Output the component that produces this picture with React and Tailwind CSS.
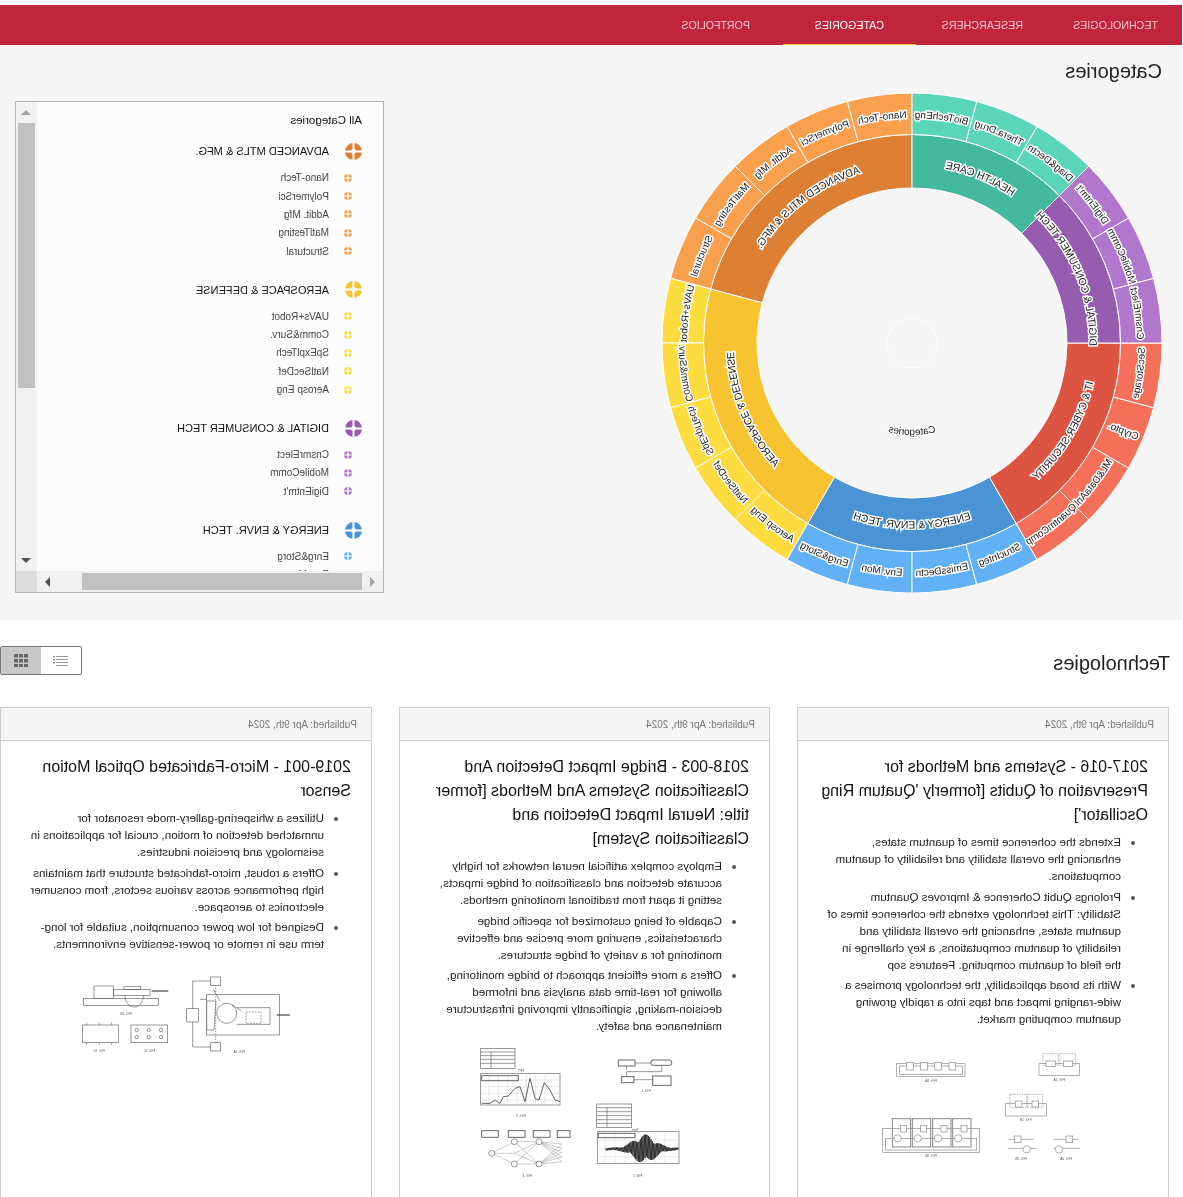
const SANS = "font-['Liberation_Sans',Arial,sans-serif]";

const navItems = [
  { label: "Technologies", w: "w-[135px]", pl: "pl-[24px]" },
  { label: "Researchers", w: "w-[131px]", pl: "pl-[24px]" },
  { label: "Categories", w: "w-[133px]", pl: "pl-[32px]", active: true },
  { label: "Portfolios", w: "w-[133px]", pl: "pl-[33px]" },
];

const groups = [
  { name: "ADVANCED MTLS & MFG.", dark: "#dd8033", light: "#f9a04e", leaves: ["Nano-Tech", "PolymerSci", "Addit. Mfg", "MatlTesting", "Structural"] },
  { name: "AEROSPACE & DEFENSE", dark: "#f8c330", light: "#fddc3f", leaves: ["UAVs+Robot", "Comm&Surv.", "SpExplTech", "NatlSecDef", "Aerosp Eng"] },
  { name: "ENERGY & ENVR. TECH", dark: "#4a94d6", light: "#62b0f5", leaves: ["Enrg&Storg", "Env. Mon", "EmissDectn", "StrucInteg"] },
  { name: "IT & CYBER-SECURITY", dark: "#dd5542", light: "#f5705b", leaves: ["QuantmComp", "ML&DataAnl", "Crypto.", "SecStorage"] },
  { name: "DIGITAL & CONSUMER TECH", dark: "#965cb0", light: "#b077cc", leaves: ["CnsmrElect", "MobileComm", "DigiEntm't"] },
  { name: "HEALTH CARE", dark: "#44b99c", light: "#5bd5b8", leaves: ["Diag&Dectn", "Thera.Drug", "BioTechEng"] },
];

// the side list runs in its own order and is scrolled off after the energy group
const panelGroups = [groups[0], groups[1], groups[4], groups[2]];

const C = 251;
const pt = (r, a) => {
  const t = (a * Math.PI) / 180;
  return [C + r * Math.sin(t), C - r * Math.cos(t)];
};
const sector = (r0, r1, a0, a1) => {
  const [x0, y0] = pt(r1, a0);
  const [x1, y1] = pt(r1, a1);
  const [x2, y2] = pt(r0, a1);
  const [x3, y3] = pt(r0, a0);
  const big = a1 - a0 > 180 ? 1 : 0;
  return `M${x0} ${y0}A${r1} ${r1} 0 ${big} 1 ${x1} ${y1}L${x2} ${y2}A${r0} ${r0} 0 ${big} 0 ${x3} ${y3}Z`;
};
// arc for a label: clockwise in the upper half, reversed in the lower half
const labelArc = (r, a0, a1) => {
  const mid = (a0 + a1) / 2;
  const flip = mid > 90 && mid < 270;
  const rr = flip ? r + 4 : r - 4;
  const [x0, y0] = pt(rr, a0 - 20);
  const [x1, y1] = pt(rr, a1 + 20);
  return flip
    ? `M${x1} ${y1}A${rr} ${rr} 0 0 0 ${x0} ${y0}`
    : `M${x0} ${y0}A${rr} ${rr} 0 0 1 ${x1} ${y1}`;
};

function ArcLabel({ id, r, a0, a1, children, size = 10.5 }) {
  return (
    <>
      <path id={id} d={labelArc(r, a0, a1)} fill="none" />
      {/* halo goes in its own layer, or each glyph's stroke eats the one before it */}
      <text aria-hidden="true" fontSize={size} fill="#fff" stroke="#fff" strokeWidth="3" className={SANS}>
        <textPath href={`#${id}`} startOffset="50%" textAnchor="middle">
          {children}
        </textPath>
      </text>
      <text fontSize={size} fill="#222" className={SANS}>
        <textPath href={`#${id}`} startOffset="50%" textAnchor="middle">
          {children}
        </textPath>
      </text>
    </>
  );
}

// short label that sits radially instead of along the arc
function RadialLabel({ r, a, children, size = 10 }) {
  const [x, y] = pt(r, a);
  const props = { x, y: y + 3.5, fontSize: size, textAnchor: "middle", transform: `rotate(-22.5 ${x} ${y})`, className: SANS };
  return (
    <>
      <text aria-hidden="true" {...props} fill="#fff" stroke="#fff" strokeWidth="3">
        {children}
      </text>
      <text {...props} fill="#222">
        {children}
      </text>
    </>
  );
}

function Sunburst() {
  const sectors = [];
  const labels = [];
  let a = 0;
  groups.forEach((g, gi) => {
    const start = a;
    const end = a + g.leaves.length * 15;
    sectors.push(<path key={g.name} d={sector(155, 208.5, start, end)} fill={g.dark} stroke="#fff" strokeWidth="1" />);
    labels.push(
      <ArcLabel key={g.name} id={`g${gi}`} r={181.5} a0={start} a1={end}>
        {g.name}
      </ArcLabel>
    );
    g.leaves.forEach((leaf, li) => {
      const l0 = start + li * 15;
      sectors.push(<path key={leaf} d={sector(208.5, 250, l0, l0 + 15)} fill={g.light} stroke="#fff" strokeWidth="1" />);
      labels.push(
        leaf === "Crypto." ? (
          <RadialLabel key={leaf} r={229} a={l0 + 7.5}>
            {leaf}
          </RadialLabel>
        ) : (
          <ArcLabel key={leaf} id={`l${gi}-${li}`} r={229} a0={l0} a1={l0 + 15} size={10}>
            {leaf}
          </ArcLabel>
        )
      );
    });
    a = end;
  });
  return (
    <svg width="502" height="502" viewBox="0 0 502 502" className="shrink-0">
      {sectors}
      <circle cx={C} cy={C} r="25" fill="none" stroke="#fff" strokeWidth="1" />
      {labels}
      <ArcLabel id="center" r={88} a0={170} a1={190} size={10}>
        Categories
      </ArcLabel>
    </svg>
  );
}

function PlusDot({ size, color, bar }) {
  return (
    <svg width={size} height={size} viewBox="0 0 17 17" className="shrink-0">
      <circle cx="8.5" cy="8.5" r="8.5" fill={color} />
      <path d="M8.5 0V17M0 8.5H17" stroke="#fff" strokeWidth={bar} />
      <circle cx="8.5" cy="8.5" r="2.4" fill="#fff" />
    </svg>
  );
}

function Arrow({ dir, color }) {
  const pts = {
    up: "0,7 5,2 10,7",
    down: "0,2 10,2 5,7",
    left: "7,0 7,10 2,5",
    right: "2,0 2,10 7,5",
  };
  return (
    <svg width="10" height="10" viewBox="0 0 10 10">
      <polygon points={pts[dir]} fill={color} />
    </svg>
  );
}

function CategoryPanel() {
  return (
    <div className="mt-[9px] w-[369px] h-[492px] border border-[#b5b5b5] bg-[#fcfcfc] flex flex-col shrink-0">
      <div className="flex flex-1 min-h-0">
        <div className="flex-1 overflow-hidden pl-[21px] pt-[11px]">
          <p className="text-[11.5px] leading-[14px] text-[#111]">All Categories</p>
          {panelGroups.map((g, i) => (
            <div key={g.name} className={i === 0 ? "mt-[16px]" : "mt-[21px]"}>
              <div className="flex items-center h-[17px] mb-[8.5px]">
                <PlusDot size={17} color={g.dark} bar={2} />
                <span className="ml-[16px] text-[11px] text-[#111] whitespace-nowrap">{g.name}</span>
              </div>
              {g.leaves.map((leaf) => (
                <div key={leaf} className="flex items-center h-[18.4px] pl-[10px]">
                  <PlusDot size={8} color={g.light} bar={2.5} />
                  <span className="ml-[15px] text-[10px] text-[#444] whitespace-nowrap">{leaf}</span>
                </div>
              ))}
            </div>
          ))}
        </div>
        <div className="w-[21px] bg-[#f1f1f1] flex flex-col items-center">
          <div className="h-[21px] flex items-center justify-center">
            <Arrow dir="up" color="#a3a3a3" />
          </div>
          <div className="w-[17px] h-[265px] bg-[#c1c1c1]" />
          <div className="mt-auto h-[21px] flex items-center justify-center">
            <Arrow dir="down" color="#505050" />
          </div>
        </div>
      </div>
      <div className="h-[21px] flex">
        <div className="flex-1 bg-[#f1f1f1] flex items-center pl-[6px]">
          <Arrow dir="left" color="#a3a3a3" />
          <div className="ml-[5px] w-[280px] h-[17px] bg-[#c1c1c1]" />
          <div className="ml-[30px]">
            <Arrow dir="right" color="#505050" />
          </div>
        </div>
        <div className="w-[21px] bg-[#dcdcdc]" />
      </div>
    </div>
  );
}

const s = { fill: "none", stroke: "#666", strokeWidth: 2 };

function Fig({ w, h, x, y, children, labels = [] }) {
  // drawn in the coordinates of the reference at 3x; the group undoes the page flip
  return (
    <svg width={w / 3} height={h / 3} viewBox={`0 0 ${w} ${h}`} className="block blur-[0.5px]" style={{ marginLeft: x, marginTop: y }}>
      <g transform={`translate(${w},0) scale(-1,1)`} {...s}>
        {children}
      </g>
      {labels.map(([lx, ly, t]) => (
        <text key={t + lx} x={w - lx} y={ly} fontSize="10" textAnchor="middle" fill="#555" className={SANS}>
          {t}
        </text>
      ))}
    </svg>
  );
}

function FigMotion() {
  return (
    <Fig w={750} h={330} x="61px" y="1px" labels={[[198, 176, "FIG. 1B"], [117, 289, "FIG. 1D"], [268, 289, "FIG. 1C"], [538, 292, "FIG. 1A"]]}>
      <rect x="70" y="127" width="225" height="21" />
      <rect x="102" y="90" width="58" height="37" />
      <rect x="160" y="100" width="110" height="18" />
      <rect x="192" y="92" width="50" height="8" />
      <path d="M195 118C195 165 250 165 250 118" />
      <path d="M275 105H325" strokeWidth="3" stroke="#222" />
      <rect x="67" y="207" width="108" height="53" />
      <path d="M80 200V207M118 200V207M155 200V207M80 260V266M118 260V266M155 260V266" />
      <rect x="213" y="207" width="110" height="53" />
      {[230, 266, 303].map((cx) => (
        <g key={cx}>
          <circle cx={cx} cy="222" r="5" />
          <circle cx={cx} cy="243" r="5" />
        </g>
      ))}
      <rect x="452" y="63" width="30" height="25" />
      <rect x="380" y="158" width="35" height="40" />
      <rect x="452" y="260" width="30" height="25" />
      <path d="M452 75H398V158M398 198V273H452" />
      <rect x="440" y="115" width="218" height="122" />
      <path d="M440 135H468L462 222H440Z" />
      <path d="M467 88V260" strokeDasharray="4 4" />
      <circle cx="500" cy="172" r="30" />
      <rect x="558" y="168" width="45" height="35" strokeDasharray="5 4" />
      <path d="M530 155H630V205H530" />
      <path d="M650 177H690" strokeWidth="3" stroke="#222" />
      <path d="M460 100L480 135M515 145L545 165M440 130L420 130" />
    </Fig>
  );
}

const wave = Array.from({ length: 110 }, (_, i) => {
  const env = Math.exp(-Math.pow((i - 58) / 22, 2)) * 40 + 4;
  return `${422 + i * 2} ${327 + (i % 2 ? env : -env) * (0.5 + 0.5 * Math.abs(Math.sin(i * 1.7)))}`;
}).join(" L");

const netLinks = [
  [80, 340, 148, 305], [80, 340, 148, 340], [80, 340, 148, 372],
  [148, 305, 222, 305], [148, 305, 222, 372], [148, 340, 222, 305], [148, 340, 222, 372],
  [148, 372, 222, 305], [148, 372, 222, 372],
  [222, 305, 290, 312], [222, 305, 290, 325], [222, 305, 290, 338], [222, 305, 290, 350], [222, 305, 290, 365],
  [222, 372, 290, 312], [222, 372, 290, 325], [222, 372, 290, 338], [222, 372, 290, 350], [222, 372, 290, 365],
];

function FigBridge() {
  return (
    <Fig w={720} h={471} x="64px" y="6px" labels={[[168, 232, "FIG. 3"], [187, 412, "FIG. 4"], [543, 155, "FIG. 1"], [518, 412, "FIG. 2"], [168, 96, "FFT"], [510, 272, "Time"]]}>
      <rect x="47" y="25" width="103" height="60" />
      <path d="M47 36H150M47 47H150M47 58H150M47 70H150M78 36V85" />
      <rect x="47" y="100" width="238" height="95" />
      <path d="M72 100V195M100 100V195M128 100V195M156 100V195M184 100V195M212 100V195M240 100V195M47 120H285M47 140H285M47 160H285M47 180H285" stroke="#bbb" strokeWidth="1" />
      <path d="M50 190L75 190L90 180L105 190L115 170L130 168L150 145L165 140L180 185L195 115L210 175L222 180L238 128L255 150L270 180L285 185" strokeWidth="2.5" stroke="#444" />
      <rect x="50" y="107" width="110" height="15" strokeWidth="3" />
      <rect x="460" y="60" width="50" height="18" strokeWidth="3" />
      <rect x="558" y="60" width="62" height="16" rx="6" strokeWidth="3" />
      <rect x="470" y="110" width="37" height="18" strokeWidth="3" />
      <rect x="563" y="108" width="55" height="28" strokeWidth="3" />
      <path d="M510 69H558M590 76V95H485V110M485 78V90M507 119H563" />
      <rect x="395" y="192" width="105" height="70" />
      <path d="M395 203H500M395 215H500M395 227H500M395 239H500M395 250H500M426 203V262" />
      <rect x="397" y="275" width="245" height="95" />
      <path d="M420 275V370M450 275V370M480 275V370M510 275V370M540 275V370M570 275V370M600 275V370M397 300H642M397 327H642M397 350H642" stroke="#ccc" strokeWidth="1" />
      <path d={`M${wave}`} strokeWidth="2.5" stroke="#222" />
      <rect x="400" y="280" width="110" height="13" strokeWidth="3" />
      {[[50, 50], [130, 50], [205, 50], [277, 38]].map(([x, w]) => (
        <rect key={x} x={x} y="272" width={w} height="20" strokeWidth="3" />
      ))}
      <g stroke="#999" strokeWidth="1.5">
        {netLinks.map(([a, b, c, d]) => (
          <path key={`${a}${b}${c}${d}`} d={`M${a} ${b}L${c} ${d}`} />
        ))}
      </g>
      {[[80, 340], [148, 305], [148, 372], [222, 305], [222, 372]].map(([cx, cy]) => (
        <circle key={`${cx}${cy}`} cx={cx} cy={cy} r="9" fill="#fff" />
      ))}
    </Fig>
  );
}

function FigQubits() {
  const tall = [97, 157, 218, 278];
  return (
    <Fig w={720} h={471} x="68px" y="14px" labels={[[213, 124, "FIG. 5A"], [598, 120, "FIG. 1A"], [497, 240, "FIG. 1B"], [213, 348, "FIG. 5B"], [483, 356, "FIG. 2B"], [618, 356, "FIG. 2A"]]}>
      <g stroke="#888">
        <rect x="110" y="68" width="205" height="38" />
        <rect x="118" y="75" width="190" height="25" />
        {[140, 182, 224, 267].map((x) => (
          <rect key={x} x={x} y="65" width="20" height="22" fill="#fff" />
        ))}
        <rect x="537" y="68" width="122" height="35" />
        <rect x="548" y="38" width="47" height="35" strokeDasharray="4 3" />
        <rect x="600" y="38" width="47" height="35" strokeDasharray="4 3" />
        <rect x="558" y="60" width="28" height="16" fill="#fff" />
        <rect x="610" y="60" width="28" height="16" fill="#fff" />
        <rect x="436" y="188" width="123" height="37" />
        <rect x="450" y="160" width="50" height="40" strokeDasharray="4 3" />
        <rect x="503" y="160" width="45" height="40" strokeDasharray="4 3" />
        <rect x="466" y="180" width="20" height="18" fill="#fff" />
        <rect x="516" y="180" width="20" height="18" fill="#fff" />
        <rect x="68" y="262" width="290" height="72" />
        <rect x="76" y="292" width="274" height="35" />
        {tall.map((x) => (
          <g key={x}>
            <rect x={x} y="233" width="55" height="85" strokeWidth="3" />
            <rect x={x + 25} y="253" width="18" height="20" fill="#fff" />
            <circle cx={x + 16} cy="292" r="11" fill="#fff" />
          </g>
        ))}
        <path d="M445 295H520M445 322H530" />
        <rect x="463" y="285" width="20" height="20" fill="#fff" />
        <circle cx="500" cy="325" r="11" fill="#fff" />
        <path d="M580 295H655M580 322H660" />
        <rect x="618" y="285" width="20" height="20" fill="#fff" />
        <circle cx="597" cy="325" r="11" fill="#fff" />
      </g>
    </Fig>
  );
}

const cards = [
  {
    title: "2017-016 - Systems and Methods for Preservation of Qubits [formerly 'Quatum Ring Oscillator']",
    bullets: [
      "Extends the coherence times of quantum states, enhancing the overall stability and reliability of quantum computations.",
      "Prolongs Qubit Coherence & Improves Quantum Stability: This technology extends the coherence times of quantum states, enhancing the overall stability and reliability of quantum computations, a key challenge in the field of quantum computing. Features sop",
      "With its broad applicability, the technology promises a wide-ranging impact and taps into a rapidly growing quantum computing market.",
    ],
    fig: <FigQubits />,
  },
  {
    title: "2018-003 - Bridge Impact Detection And Classification Systems And Methods [former title: Neural Impact Detection and Classification System]",
    bullets: [
      "Employs complex artificial neural networks for highly accurate detection and classification of bridge impacts, setting it apart from traditional monitoring methods.",
      "Capable of being customized for specific bridge characteristics, ensuring more precise and effective monitoring for a variety of bridge structures.",
      "Offers a more efficient approach to bridge monitoring, allowing for real-time data analysis and informed decision-making, significantly improving infrastructure maintenance and safety.",
    ],
    fig: <FigBridge />,
  },
  {
    title: "2019-001 - Micro-Fabricated Optical Motion Sensor",
    bullets: [
      "Utilizes a whispering-gallery-mode resonator for unmatched detection of motion, crucial for applications in seismology and precision industries.",
      "Offers a robust, micro-fabricated structure that maintains high performance across various sectors, from consumer electronics to aerospace.",
      "Designed for low power consumption, suitable for long-term use in remote or power-sensitive environments.",
    ],
    fig: <FigMotion />,
  },
];

function TechCard({ card }) {
  return (
    <div className="h-[520px] border border-[#ccc] bg-white">
      <div className="h-[33px] bg-[#f5f5f5] border-b border-[#ccc] flex items-center pl-[14px] text-[10px] text-[#777]">
        Published: Apr 9th, 2024
      </div>
      <div className="pt-[14px]">
        <h3 className="pl-[20px] pr-[20px] text-[16px] leading-[24px] text-[#111]">{card.title}</h3>
        <ul className="mt-[6px] pl-[47px] pr-[28px] list-disc text-[11.65px] leading-[17px] text-[#222] marker:text-[#555]">
          {card.bullets.map((b) => (
            <li key={b} className="mb-[3.7px]">{b}</li>
          ))}
        </ul>
        {card.fig}
      </div>
    </div>
  );
}

export default function App() {
  return (
    <div className={`${SANS} w-[1183px] h-[1197px] overflow-hidden bg-white -scale-x-100`}>
      <div className="h-[5px]" />
      <nav className="ml-px h-[40px] bg-[#c1253b] flex">
        {navItems.map((n) => (
          <a
            key={n.label}
            className={`${n.w} ${n.pl} h-full flex items-center uppercase text-[10.7px] ${
              n.active ? "text-white shadow-[inset_0_-1px_0_#f8c330]" : "text-[#f2c4cb]"
            }`}
          >
            {n.label}
          </a>
        ))}
      </nav>

      <section className="ml-px h-[575px] bg-[#f5f5f5] pl-[19px] pr-[15px] pt-[13px]">
        <h2 className="pl-px text-[20px] leading-[26px] text-[#222]">Categories</h2>
        <div className="mt-[8px] flex justify-between items-start">
          <Sunburst />
          <CategoryPanel />
        </div>
      </section>

      <div className="mt-[26px] h-[29px] pl-[13px] flex items-center justify-between">
        <h2 className="mt-[4px] text-[20px] leading-[26px] text-[#222]">Technologies</h2>
        <div className="w-[82px] h-[29px] border border-[#777] rounded-[2px] flex">
          <button className="flex-1 flex items-center justify-center">
            <svg width="15" height="11" viewBox="0 0 15 11" fill="#999">
              <rect x="0" y="1" width="12" height="1" />
              <rect x="0" y="4" width="12" height="1" />
              <rect x="0" y="7" width="12" height="1" />
              <rect x="0" y="10" width="12" height="1" />
              <rect x="13" y="1" width="2" height="1.5" />
              <rect x="13" y="4" width="2" height="1.5" />
              <rect x="13" y="7" width="2" height="1.5" />
            </svg>
          </button>
          <button className="flex-1 bg-[#c8c8c8] flex items-center justify-center">
            <svg width="14" height="13" viewBox="0 0 14 13" fill="#666">
              {[0, 5, 10].map((x) =>
                [0, 5, 10].map((y) => <rect key={`${x}${y}`} x={x} y={y} width="4" height="3.5" />)
              )}
            </svg>
          </button>
        </div>
      </div>

      <div className="mt-[32px] ml-[14px] grid grid-cols-[372px_371px_372px] gap-[27px]">
        {cards.map((c) => (
          <TechCard key={c.title} card={c} />
        ))}
      </div>
    </div>
  );
}
